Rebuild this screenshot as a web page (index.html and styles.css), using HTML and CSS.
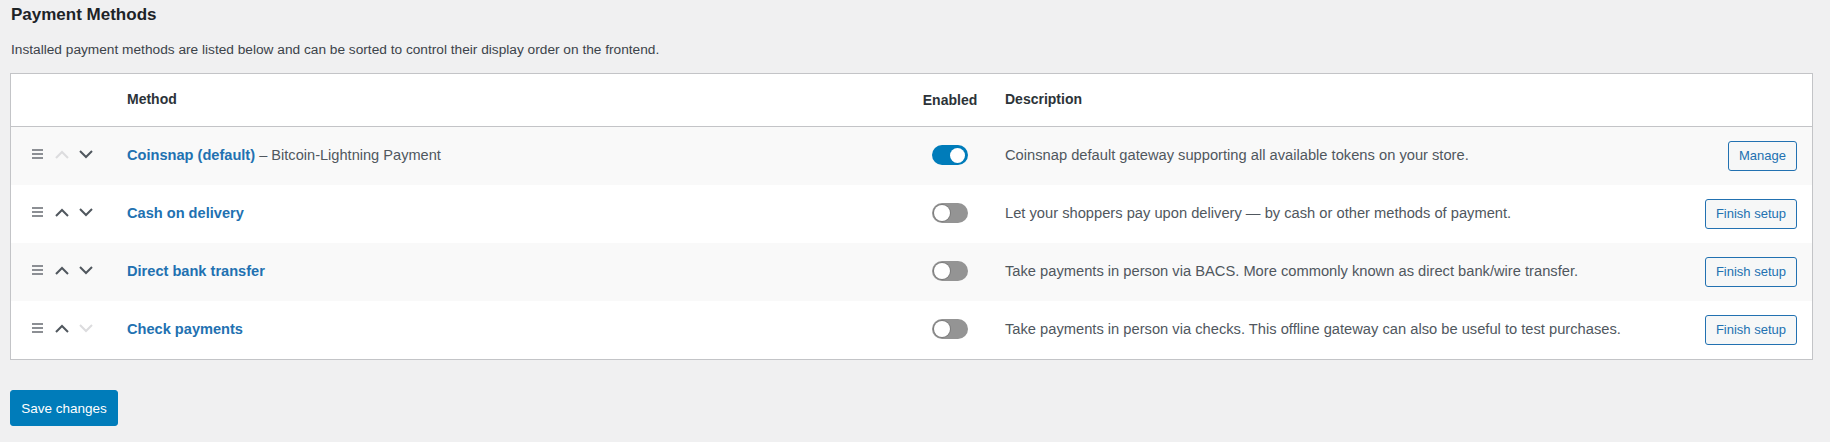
FILE: index.html
```html
<!DOCTYPE html>
<html lang="en">
<head>
<meta charset="utf-8">
<title>Payment Methods</title>
<link rel="stylesheet" href="styles.css">
</head>
<body>
<div class="wrap">
  <h2 class="title">Payment Methods</h2>
  <p class="intro">Installed payment methods are listed below and can be sorted to control their display order on the frontend.</p>

  <div class="methods">
    <div class="row head">
      <div class="c-sort"></div>
      <div class="c-name">Method</div>
      <div class="c-enabled">Enabled</div>
      <div class="c-desc">Description</div>
      <div class="c-action"></div>
    </div>

    <div class="row alt">
      <div class="c-sort">
        <svg class="handle" width="11" height="10" viewBox="0 0 11 10"><rect y="0" width="11" height="2"/><rect y="4" width="11" height="2"/><rect y="8" width="11" height="2"/></svg>
        <svg class="chev off" width="14" height="9" viewBox="0 0 14 9"><polyline points="1,8 7,2 13,8"/></svg>
        <svg class="chev" width="14" height="9" viewBox="0 0 14 9"><polyline points="1,1 7,7 13,1"/></svg>
      </div>
      <div class="c-name"><a class="name" href="#">Coinsnap (default)</a><span class="sub"> – Bitcoin-Lightning Payment</span></div>
      <div class="c-enabled"><span class="toggle on"><span class="knob"></span></span></div>
      <div class="c-desc">Coinsnap default gateway supporting all available tokens on your store.</div>
      <div class="c-action"><a class="btn" href="#">Manage</a></div>
    </div>

    <div class="row">
      <div class="c-sort">
        <svg class="handle" width="11" height="10" viewBox="0 0 11 10"><rect y="0" width="11" height="2"/><rect y="4" width="11" height="2"/><rect y="8" width="11" height="2"/></svg>
        <svg class="chev" width="14" height="9" viewBox="0 0 14 9"><polyline points="1,8 7,2 13,8"/></svg>
        <svg class="chev" width="14" height="9" viewBox="0 0 14 9"><polyline points="1,1 7,7 13,1"/></svg>
      </div>
      <div class="c-name"><a class="name" href="#">Cash on delivery</a></div>
      <div class="c-enabled"><span class="toggle"><span class="knob"></span></span></div>
      <div class="c-desc">Let your shoppers pay upon delivery — by cash or other methods of payment.</div>
      <div class="c-action"><a class="btn" href="#">Finish setup</a></div>
    </div>

    <div class="row alt">
      <div class="c-sort">
        <svg class="handle" width="11" height="10" viewBox="0 0 11 10"><rect y="0" width="11" height="2"/><rect y="4" width="11" height="2"/><rect y="8" width="11" height="2"/></svg>
        <svg class="chev" width="14" height="9" viewBox="0 0 14 9"><polyline points="1,8 7,2 13,8"/></svg>
        <svg class="chev" width="14" height="9" viewBox="0 0 14 9"><polyline points="1,1 7,7 13,1"/></svg>
      </div>
      <div class="c-name"><a class="name" href="#">Direct bank transfer</a></div>
      <div class="c-enabled"><span class="toggle"><span class="knob"></span></span></div>
      <div class="c-desc">Take payments in person via BACS. More commonly known as direct bank/wire transfer.</div>
      <div class="c-action"><a class="btn" href="#">Finish setup</a></div>
    </div>

    <div class="row">
      <div class="c-sort">
        <svg class="handle" width="11" height="10" viewBox="0 0 11 10"><rect y="0" width="11" height="2"/><rect y="4" width="11" height="2"/><rect y="8" width="11" height="2"/></svg>
        <svg class="chev" width="14" height="9" viewBox="0 0 14 9"><polyline points="1,8 7,2 13,8"/></svg>
        <svg class="chev off" width="14" height="9" viewBox="0 0 14 9"><polyline points="1,1 7,7 13,1"/></svg>
      </div>
      <div class="c-name"><a class="name" href="#">Check payments</a></div>
      <div class="c-enabled"><span class="toggle"><span class="knob"></span></span></div>
      <div class="c-desc">Take payments in person via checks. This offline gateway can also be useful to test purchases.</div>
      <div class="c-action"><a class="btn" href="#">Finish setup</a></div>
    </div>
  </div>

  <div class="submit">
    <button class="btn-primary" type="button">Save changes</button>
  </div>
</div>
</body>
</html>
```

FILE: styles.css
```css
html, body {
  margin: 0;
  padding: 0;
  background: #f0f0f1;
}
body {
  font-family: "Liberation Sans", Arial, sans-serif;
  color: #3c434a;
  font-size: 13px;
}
.wrap {
  padding: 0 17px 0 10px;
}
.title {
  margin: 3px 0 0 1px;
  font-size: 17px;
  line-height: 24px;
  font-weight: 700;
  color: #1d2327;
}
.intro {
  margin: 13px 0 0 1px;
  font-size: 13.7px;
  line-height: 20px;
  color: #3c434a;
}
.methods {
  margin-top: 13px;
  background: #fff;
  border: 1px solid #c3c4c7;
}
.row {
  display: grid;
  grid-template-columns: 116px 780px 86px 1fr auto;
  align-items: center;
  height: 58px;
  font-size: 14px;
}
.row.alt {
  background: #f9f9f9;
}
.row.head {
  height: 52px;
  border-bottom: 1px solid #c3c4c7;
  font-weight: 700;
  color: #2c3338;
  background: #fff;
}
.c-sort {
  display: flex;
  align-items: center;
  padding-left: 21px;
  margin-top: -4px;
}
.handle {
  fill: #8c8f94;
  margin-right: 12px;
}
.chev {
  fill: none;
  stroke: #50575e;
  stroke-width: 2;
  margin-right: 10px;
}
.chev.off {
  stroke: #dcdcde;
}
.c-name {
  margin-top: -3px;
  font-size: 14.6px;
}
.head .c-name {
  font-size: 14px;
}
.name {
  color: #2271b1;
  font-weight: 700;
  text-decoration: none;
}
.sub {
  color: #50575e;
}
.c-enabled {
  display: flex;
  justify-content: center;
}
.toggle {
  display: flex;
  align-items: center;
  justify-content: flex-start;
  box-sizing: border-box;
  width: 36px;
  height: 20px;
  padding: 0 2px;
  border-radius: 10px;
  background: #949494;
  margin-top: -2px;
}
.toggle .knob {
  width: 16px;
  height: 16px;
  border-radius: 50%;
  background: #fff;
  box-shadow: 0 0 0 1px #7c7c7c;
}
.toggle.on {
  justify-content: flex-end;
  background: #007cba;
  padding: 0 3px;
}
.toggle.on .knob {
  width: 15px;
  height: 15px;
  box-shadow: none;
}
.c-desc {
  padding-left: 12px;
  color: #50575e;
  margin-top: -3px;
  font-size: 14.7px;
}
.head .c-desc {
  font-size: 14px;
  color: #2c3338;
}
.c-action {
  padding-right: 15px;
  display: flex;
  justify-content: flex-end;
}
.btn {
  display: inline-block;
  box-sizing: border-box;
  height: 30px;
  line-height: 28px;
  padding: 0 10px;
  border: 1px solid #2271b1;
  border-radius: 3px;
  background: #f6f7f7;
  color: #2271b1;
  font-size: 13px;
  text-decoration: none;
  white-space: nowrap;
}
.submit {
  margin-top: 30px;
}
.btn-primary {
  box-sizing: border-box;
  height: 36px;
  width: 108px;
  padding: 0;
  border: 1px solid #007cba;
  border-radius: 3px;
  background: #007cba;
  color: #fff;
  font-family: "Liberation Sans", Arial, sans-serif;
  font-size: 13.5px;
  cursor: pointer;
}
```
